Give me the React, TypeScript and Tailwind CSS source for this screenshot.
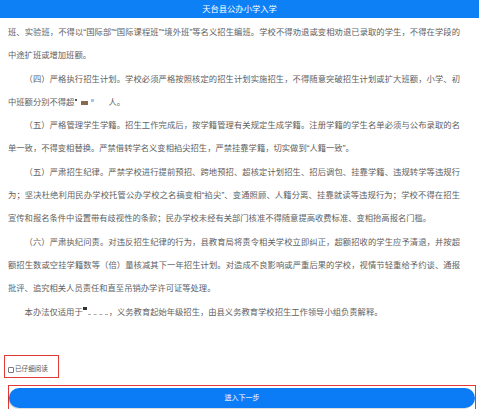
import React from "react";

const paras: React.ReactNode[] = [
  "（四）严格执行招生计划。学校必须严格按照核定的招生计划实施招生，不得随意突破招生计划或扩大班额，小学、初中班额分别不得超",
  "（五）严格管理学生学籍。招生工作完成后，按学籍管理有关规定生成学籍。注册学籍的学生名单必须与公布录取的名单一致，不得变相替换。严禁借转学名义变相掐尖招生，严禁挂靠学籍，切实做到“人籍一致”。",
  "（五）严肃招生纪律。严禁学校进行提前预招、跨地预招、超核定计划招生、招后调包、挂靠学籍、违规转学等违规行为；坚决杜绝利用民办学校托管公办学校之名搞变相“掐尖”、变通照顾、人籍分离、挂靠就读等违规行为；学校不得在招生宣传和报名条件中设置带有歧视性的条款；民办学校未经有关部门核准不得随意提高收费标准、变相抬高报名门槛。",
  "（六）严肃执纪问责。对违反招生纪律的行为，县教育局将责令相关学校立即纠正，超额招收的学生应予清退，并按超额招生数或空挂学籍数等（倍）量核减其下一年招生计划。对造成不良影响或严重后果的学校，视情节轻重给予约谈、通报批评、追究相关人员责任和直至吊销办学许可证等处理。",
];

export default function App() {
  return (
    <div className="w-[479px] h-[409px] overflow-hidden bg-white font-['Liberation_Sans','Noto_Sans_CJK_SC',sans-serif]">
      <div className="h-[18px] bg-[#0d80f6] flex items-center justify-center text-white text-[8.3px]">
        天台县公办小学入学
      </div>

      <div className="pt-[3px] pl-2 pr-[19px] text-[8.3px] leading-[23.3px] text-[#616161] text-justify">
        <p>
          班、实验班，不得以“国际部”“国际课程班”“境外班”等名义招生编班。学校不得劝退或变相劝退已录取的学生，不得在学段的中途扩班或增加班额。
        </p>
        <p className="indent-[2em]">
          {paras[0]}
          <span className="inline-block w-[2px] h-[2px] bg-[#555] align-[4px] mx-[1px]" />
          <span className="inline-block w-[7px] h-[4px] bg-[#8a6a4e] ml-[3px]" />
          <span className="inline-block w-[3px] h-[3px] bg-[#9cc8f0] ml-[3px] mr-[14px] align-[3px]" />
          人。
        </p>
        {paras.slice(1).map((p, i) => (
          <p key={i} className="indent-[2em]">
            {p}
          </p>
        ))}
        <p className="indent-[2em]">
          本办法仅适用于
          <span className="inline-block w-[4px] h-[3px] bg-[#333] align-[5px]" />
          <span className="inline-block w-[20px] border-b border-dashed border-[#aaa] mx-[1px]" />
          ，义务教育起始年级招生，由县义务教育学校招生工作领导小组负责解释。
        </p>
      </div>

      <div className="mt-[31px] ml-1 w-[55px] h-[23px] border border-[#e53935] flex items-end pb-[4px] pl-[3px]">
        <label className="flex items-center gap-[1px] text-[6.6px] text-[#555] leading-none">
          <span className="w-[6px] h-[6px] border border-[#777] rounded-[1px] bg-white" />
          已仔细阅读
        </label>
      </div>

      <div className="mt-[7px] ml-2 w-[468px] h-[26px] border border-[#e53935] pt-[2px]">
        <button className="w-full h-[20px] rounded-full bg-[#0b7cf6] text-white text-[7px] flex items-center justify-center shadow-[-1px_1px_1px_rgba(0,0,0,0.15)]">
          进入下一步
        </button>
      </div>
    </div>
  );
}
